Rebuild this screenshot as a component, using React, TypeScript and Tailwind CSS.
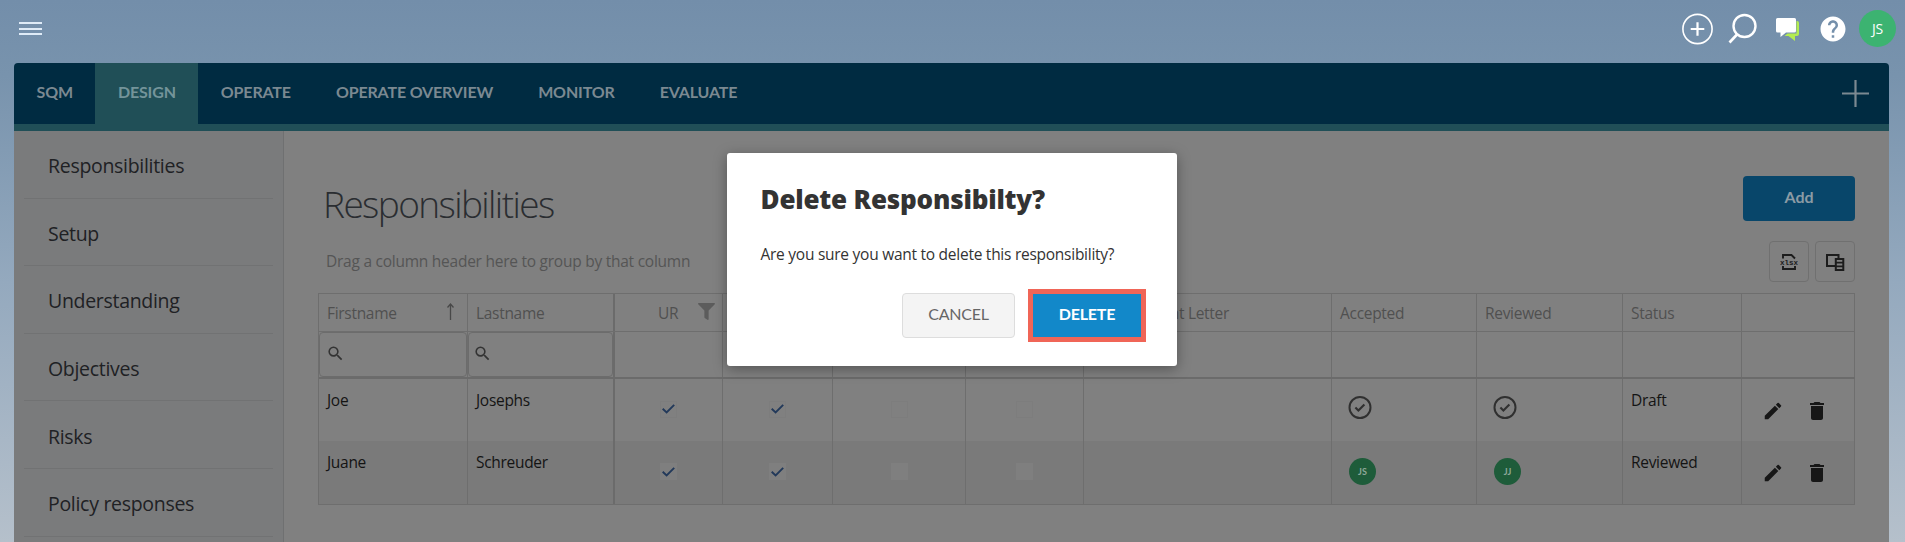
import { MdDelete, MdEdit, MdHelp, MdSearch } from 'react-icons/md';
import { FaFilter } from 'react-icons/fa';

const tabs = ['SQM', 'DESIGN', 'OPERATE', 'OPERATE OVERVIEW', 'MONITOR', 'EVALUATE'];

const menu = [
  'Responsibilities',
  'Setup',
  'Understanding',
  'Objectives',
  'Risks',
  'Policy responses',
];

const columns = [
  { label: 'Firstname', width: 'w-[149px]' },
  { label: 'Lastname', width: 'w-[147px]' },
  { label: 'UR', width: 'w-[108px]' },
  { label: '', width: 'w-[110px]' },
  { label: '', width: 'w-[133px]' },
  { label: '', width: 'w-[118px]' },
  { label: 'nt Letter', width: 'w-[248px]' },
  { label: 'Accepted', width: 'w-[145px]' },
  { label: 'Reviewed', width: 'w-[146px]' },
  { label: 'Status', width: 'w-[119px]' },
  { label: '', width: 'w-[113px]' },
];

const people = [
  { first: 'Joe', last: 'Josephs', accepted: '', reviewed: '', status: 'Draft' },
  { first: 'Juane', last: 'Schreuder', accepted: 'JS', reviewed: 'JJ', status: 'Reviewed' },
];

function border(i: number) {
  return i === 1 ? 'border-r-2 border-[#6b6b6b]' : 'border-r border-[#6e6e6e]';
}

function TopBar() {
  return (
    <header className="flex h-[63px] shrink-0 items-start justify-between pl-[19px] pr-[9px]">
      <div className="mt-[22px] flex w-[23px] flex-col gap-[3.5px]">
        <span className="h-[2px] bg-[#dfebf7]"></span>
        <span className="h-[2px] bg-[#dfebf7]"></span>
        <span className="h-[2px] bg-[#dfebf7]"></span>
      </div>
      <div className="flex items-center pt-[10px]">
        <svg className="mr-[15px]" width="32" height="32" viewBox="0 0 32 32" fill="none" stroke="#fff">
          <circle cx="16.500" cy="16" r="14.6" strokeWidth="1.6" />
          <path d="M16.500 9.2v13.6M9.7 16h13.6" strokeWidth="2.2" />
        </svg>
        <svg className="mr-[16px]" width="30" height="34" viewBox="0 0 30 34" fill="none" stroke="#fff">
          <circle cx="16.5" cy="14" r="11" strokeWidth="2.4" />
          <path d="M9 22.5L1.5 30.5" strokeWidth="2.6" />
        </svg>
        <svg className="mr-[18px]" width="26" height="26" viewBox="0 0 26 26">
          <path d="M22.500 5H23a2 2 0 0 1 2 2v11a2 2 0 0 1-2 2h-2v5l-6.500-5H10.500l3-2.500h9z" fill="#b4ec51" />
          <path d="M3.500 2H20.500A1.500 1.500 0 0 1 22 3.500V15a1.500 1.500 0 0 1-1.500 1.500H12L6.500 21v-4.500h-3A1.500 1.500 0 0 1 2 15V3.500A1.500 1.500 0 0 1 3.500 2z" fill="#fff" />
        </svg>
        <MdHelp size={30} color="#fff" />
        <div className="ml-[11px] flex size-[37px] items-center justify-center rounded-full bg-[#3cb371] font-['Open_Sans'] text-sm tracking-[-0.3px] text-white">
          JS
        </div>
      </div>
    </header>
  );
}

function NavBar() {
  return (
    <nav className="flex h-[68px] shrink-0 items-start justify-between overflow-hidden rounded-t border-b-[7px] border-[#204f57] bg-[#002b41]">
      <div className="flex h-[61px] font-['Lato'] text-base font-bold tracking-[-0.15px] text-[#7b8991]">
        {tabs.map((tab) => (
          <div
            key={tab}
            className={`flex items-center px-[22.5px] pb-[3px] ${tab === 'DESIGN' ? 'bg-[#204f57] text-[#74949a]' : ''}`}
          >
            {tab}
          </div>
        ))}
      </div>
      <svg className="mr-[20px] mt-[17px]" width="27" height="27" viewBox="0 0 27 27" stroke="#7b8991" strokeWidth="2.2">
        <path d="M13.500 0v27M0 13.500h27" />
      </svg>
    </nav>
  );
}

function SideMenu() {
  return (
    <aside className="w-[270px] shrink-0 border-r border-[#6f7071] bg-[#7a7b7c] px-[10px]">
      {menu.map((item) => (
        <div
          key={item}
          className="flex h-[67.6px] items-center border-b border-[#717273] pl-[24px] pt-[3px] font-['Open_Sans'] text-[19.5px] tracking-[-0.3px] text-[#202124]"
        >
          {item}
        </div>
      ))}
    </aside>
  );
}

function Approval({ who }: { who: string }) {
  if (who) {
    return (
      <div className="ml-[17px] mt-[17px] flex size-[27px] items-center justify-center rounded-full bg-[#1e5c3a] font-['Lato'] text-[9px] font-bold tracking-normal text-[#8fa899]">
        {who}
      </div>
    );
  }
  return (
    <svg className="ml-[16px] mt-[16px]" width="24" height="24" viewBox="0 0 24 24" fill="none" stroke="#303030">
      <circle cx="12" cy="12.500" r="10.500" strokeWidth="2" />
      <path d="M7.400 12.500l3 3L16.400 9.400" strokeWidth="2.100" />
    </svg>
  );
}

function Box({ checked, striped }: { checked: boolean; striped: boolean }) {
  return (
    <div className="flex h-full items-center justify-center pb-[2px]">
      <span className={`flex size-[17px] items-center justify-center border ${striped ? 'border-[#7f7f7f] bg-[#7f7f7f]' : 'border-[#7d7d7d]'}`}>
        {checked && (
          <svg className="shrink-0" width="13" height="10" viewBox="0 0 13 10" fill="none" stroke="#22395a" strokeWidth="1.900">
            <path d="M0.700 4.700L4.600 8.400L12.200 0.800" />
          </svg>
        )}
      </span>
    </div>
  );
}

function Grid() {
  return (
    <div className="w-[1537px] border-b border-l border-t border-[#6e6e6e] font-['Open_Sans'] text-[15.5px] tracking-[-0.3px]">
      <div className="flex h-[38px] border-b border-[#6e6e6e] text-[#505050]">
        {columns.map((col, i) => (
          <div key={i} className={`flex shrink-0 items-center pl-[8px] pt-[2px] ${col.width} ${border(i)}`}>
            {i === 2 && (
              <>
                <span className="ml-[35px] w-[40px]">{col.label}</span>
                <FaFilter size={17} color="#5c5c5c" className="mb-[4px] shrink-0" />
              </>
            )}
            {i === 6 && <span className="ml-auto mr-[102px] whitespace-nowrap">{col.label}</span>}
            {i !== 2 && i !== 6 && <span className="grow whitespace-nowrap">{col.label}</span>}
            {i === 0 && (
              <svg className="mb-[4px] mr-[12px]" width="9" height="17" viewBox="0 0 9 17" fill="none" stroke="#484848" strokeWidth="1.300">
                <path d="M4.500 17V1M1.500 4.500l3-3.500 3 3.500" />
              </svg>
            )}
          </div>
        ))}
      </div>
      <div className="flex h-[47px] border-b-2 border-[#6b6b6b]">
        {columns.map((col, i) => (
          <div key={i} className={`shrink-0 ${col.width} ${border(i)}`}>
            {i < 2 && (
              <div className={`flex h-full items-center rounded-sm border border-[#6c6c6c] pb-[3px] ${i === 0 ? 'pl-[6px]' : 'pl-[4px]'}`}>
                <MdSearch size={19} color="#333" />
              </div>
            )}
          </div>
        ))}
      </div>
      {people.map((p, r) => (
        <div key={p.first} className={`flex text-[#141414] ${r === 1 ? 'h-[63px] bg-[#7a7a7a]' : 'h-[62px]'}`}>
          {columns.map((col, i) => (
            <div key={i} className={`shrink-0 ${col.width} ${border(i)}`}>
              {i === 0 && <div className="pl-[8px] pt-[10px]">{p.first}</div>}
              {i === 1 && <div className="pl-[8px] pt-[10px]">{p.last}</div>}
              {i >= 2 && i <= 5 && <Box checked={i < 4} striped={r === 1} />}
              {i === 7 && <Approval who={p.accepted} />}
              {i === 8 && <Approval who={p.reviewed} />}
              {i === 9 && <div className="pl-[8px] pt-[10px]">{p.status}</div>}
              {i === 10 && (
                <div className="flex h-full items-center gap-[21px] pl-[20px] pt-px">
                  <MdEdit size={22} color="#171717" />
                  <MdDelete size={24} color="#171717" />
                </div>
              )}
            </div>
          ))}
        </div>
      ))}
    </div>
  );
}

function Toolbar() {
  return (
    <div className="flex gap-[6px]">
      <div className="flex h-[41px] w-[40px] items-center justify-center rounded border border-[#707070]">
        <svg width="18" height="18" viewBox="0 0 18 18" fill="none" stroke="#1c1c1c" strokeWidth="1.900">
          <path d="M3 5.500V2h8.500L15 5.500M3 13v3h12v-3" />
          <text x="9" y="11.500" textAnchor="middle" fontFamily="Liberation Mono" fontWeight="700" fontSize="7.500" letterSpacing="0" fill="#1c1c1c" stroke="none">
            xlsx
          </text>
        </svg>
      </div>
      <div className="flex h-[41px] w-[40px] items-center justify-center rounded border border-[#707070]">
        <svg width="20" height="18" viewBox="0 0 20 18" fill="none" stroke="#1c1c1c">
          <path d="M10 13H2V2h11.500v4" strokeWidth="2" />
          <path d="M10.800 6h7.500v11h-7.500z" strokeWidth="2" />
          <path d="M10.500 9.700h8M10.500 13.300h8" strokeWidth="1.700" />
        </svg>
      </div>
    </div>
  );
}

function DeleteDialog() {
  return (
    <div className="absolute left-[727px] top-[153px] flex h-[213px] w-[450px] flex-col rounded-[3px] bg-white pl-[33.5px] pr-[31px] font-['Open_Sans'] shadow-[0_3px_14px_rgba(0,0,0,0.35)]">
      <h2 className="mt-[26px] text-[26px] font-extrabold leading-[40px] tracking-[-0.2px] text-[#333]">
        Delete Responsibilty?
      </h2>
      <p className="mt-[23px] text-[15.5px] leading-[24px] tracking-[-0.26px] text-[#333]">
        Are you sure you want to delete this responsibility?
      </p>
      <div className="mt-[23px] flex items-center justify-end gap-[13px] font-['Lato'] text-base">
        <button className="h-[45px] w-[113px] rounded border border-[#ddd] bg-[#f4f4f4] pb-[3px] tracking-[-0.25px] text-[#666]">
          CANCEL
        </button>
        <button className="h-[53px] w-[118px] border-[5px] border-[#f06557] bg-[#1288c9] pb-[3px] font-bold tracking-[-0.2px] text-white">
          DELETE
        </button>
      </div>
    </div>
  );
}

export default function App() {
  return (
    <div className="relative flex h-[542px] w-[1905px] flex-col overflow-hidden bg-[linear-gradient(to_bottom,#738eaa_0%,#7893ad_14%,#94a9be_52%,#b5c0cb_100%)]">
      <TopBar />
      <div className="ml-[14px] mr-[16px] flex grow flex-col">
        <NavBar />
        <div className="flex grow bg-[#808080]">
          <SideMenu />
          <main className="pl-[34px]">
            <div className="flex h-[110px] w-[1537px] items-start justify-between pl-[5px] pt-[45px]">
              <h1 className="mt-[1px] font-['Open_Sans'] text-[37px] font-light leading-[54px] tracking-[-1.6px] text-[#2a2d31]">
                Responsibilities
              </h1>
              <button className="h-[45px] w-[112px] rounded bg-[#08466a] pb-[3px] font-['Lato'] text-base font-bold text-[#8b9ba5]">
                Add
              </button>
            </div>
            <div className="flex h-[52px] w-[1537px] items-start justify-between pl-[8px]">
              <p className="mt-[9px] font-['Open_Sans'] text-[15.5px] tracking-[-0.25px] text-[#555]">
                Drag a column header here to group by that column
              </p>
              <Toolbar />
            </div>
            <Grid />
          </main>
        </div>
      </div>
      <DeleteDialog />
    </div>
  );
}
